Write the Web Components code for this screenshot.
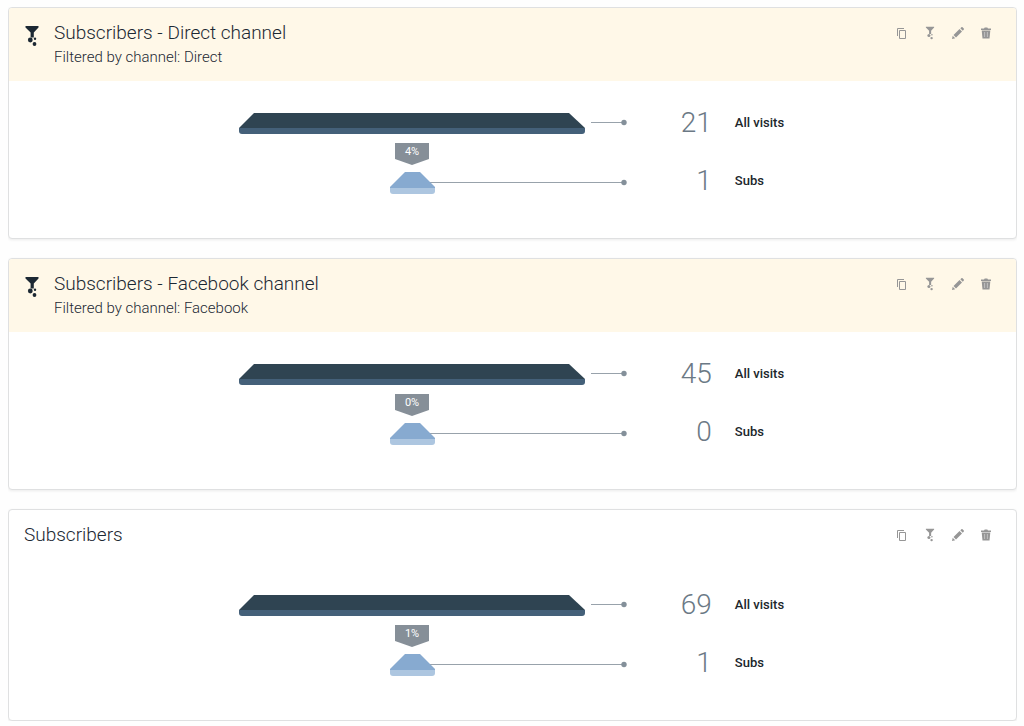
<!DOCTYPE html>
<html lang="en">
<head>
<meta charset="utf-8">
<title>Funnels</title>
<style>
  body {
    margin: 7px 7px 5px 8px;
    background: #fefefe;
    color: #1c2833;
    font-family: Roboto, "Liberation Sans", sans-serif;
  }
</style>
</head>
<body>
<funnel-list>
  <funnel-card filtered>
    <span slot="title">Subscribers - Direct channel</span>
    <span slot="filter">Filtered by channel: Direct</span>
    <funnel-chart rate="4%" first="21" first-label="All visits" last="1" last-label="Subs"></funnel-chart>
  </funnel-card>
  <funnel-card filtered>
    <span slot="title">Subscribers - Facebook channel</span>
    <span slot="filter">Filtered by channel: Facebook</span>
    <funnel-chart rate="0%" first="45" first-label="All visits" last="0" last-label="Subs"></funnel-chart>
  </funnel-card>
  <funnel-card>
    <span slot="title">Subscribers</span>
    <funnel-chart rate="1%" first="69" first-label="All visits" last="1" last-label="Subs"></funnel-chart>
  </funnel-card>
</funnel-list>

<script>
const icons = {
  funnel: `<svg viewBox="0 0 16 22">
    <path d="M1.500 1h13v1.500L9.800 7.500v5H6.600v-5L1.500 2.500z"/>
    <circle cx="6.300" cy="15" r="2.400"/><circle cx="11" cy="13.800" r="1.200"/><circle cx="10.500" cy="19" r="1.900"/>
  </svg>`,
  copy: `<svg viewBox="0 0 12 12">
    <path d="M1.500 9V1.500H8M3.500 3.500h6v8h-6z" fill="none" stroke="currentColor"/>
  </svg>`,
  edit: `<svg viewBox="0 0 12 12">
    <path d="M0 12l.7-3.200 2.500 2.500zM1.500 8L7.500 2 10 4.500l-6 6zM8.300 1.200l.9-.8c.5-.5 1-.5 1.500 0l.9.9c.5.5.5 1 0 1.500l-.8.9z"/>
  </svg>`,
  trash: `<svg viewBox="0 0 12 12">
    <path d="M1 1.500h3L4.700.5h2.600l.7 1h3V3H1z"/>
    <path d="M1.700 3.500h8.600L9.500 11.500h-7z"/>
    <path d="M4.600 5v5M7.400 5v5" stroke="#fff" stroke-opacity=".5" stroke-width=".8"/>
  </svg>`,
};

// defines an element that gets a fresh copy of its markup
function define(name, html, setup) {
  const template = document.createElement('template');
  template.innerHTML = html;
  customElements.define(name, class extends HTMLElement {
    constructor() {
      super();
      this.attachShadow({ mode: 'open' }).appendChild(template.content.cloneNode(true));
    }
    connectedCallback() {
      if (setup) setup(this, this.shadowRoot);
    }
  });
}

define('funnel-icon', `
  <style>
    :host { display: block; width: 12px; height: 14px; }
    div { height: 100%; }
    svg { display: block; width: 100%; height: 100%; fill: currentColor; }
  </style>
  <div></div>
`, (el, root) => {
  root.querySelector('div').innerHTML = icons[el.getAttribute('name')];
});

define('funnel-list', `
  <style>
    :host { display: flex; flex-direction: column; gap: 19px; }
  </style>
  <slot></slot>
`);

define('card-actions', `
  <style>
    :host { display: flex; gap: 8px; }
    button {
      display: flex;
      align-items: center;
      justify-content: center;
      width: 20px;
      height: 24px;
      padding: 0;
      border: 0;
      background: none;
      color: #969696;
      cursor: pointer;
    }
    .small { width: 12px; height: 12px; }
  </style>
  <button type="button" aria-label="Copy"><funnel-icon class="small" name="copy"></funnel-icon></button>
  <button type="button" aria-label="Filter"><funnel-icon name="funnel"></funnel-icon></button>
  <button type="button" aria-label="Edit"><funnel-icon class="small" name="edit"></funnel-icon></button>
  <button type="button" aria-label="Delete"><funnel-icon class="small" name="trash"></funnel-icon></button>
`);

define('funnel-card', `
  <style>
    :host {
      display: block;
      border: 1px solid #dfe0e1;
      border-radius: 4px;
      background: #fff;
      box-shadow: 0 1px 3px rgba(0, 0, 0, .08);
    }
    header {
      display: flex;
      align-items: flex-start;
      box-sizing: border-box;
      min-height: 53px;
      padding: 13px 20px 12px 15px;
    }
    .mark { display: none; width: 16px; height: 22px; margin: 4px 14px 0 0; }
    .text { flex: 1; }
    h2 { margin: 0; font-size: 19px; font-weight: 300; line-height: 24px; }
    p { margin: 0; font-size: 15px; font-weight: 300; line-height: 24px; }
    :host(:not([filtered])) p { display: none; }
    :host([filtered]) header { background: #fff8e8; border-radius: 3px 3px 0 0; }
    :host([filtered]) .mark { display: block; }
    .body { padding: 32px 0 44px; }
  </style>
  <header>
    <funnel-icon class="mark" name="funnel"></funnel-icon>
    <div class="text">
      <h2><slot name="title"></slot></h2>
      <p><slot name="filter"></slot></p>
    </div>
    <card-actions></card-actions>
  </header>
  <div class="body"><slot></slot></div>
`);

define('funnel-chart', `
  <style>
    :host { display: flex; justify-content: center; padding-right: 2px; }
    svg { display: block; width: 388px; height: 81px; }
    text { fill: #fff; font-size: 11px; text-anchor: middle; }
    .steps {
      display: grid;
      grid-template-columns: 85px auto;
      grid-auto-rows: 20px;
      align-content: start;
      gap: 38px 23px;
      line-height: 20px;
    }
    .count { color: #6b7985; font-size: 28px; font-weight: 300; text-align: right; }
    .label { color: #20262b; font-size: 13px; font-weight: 500; }
  </style>
  <svg viewBox="0 0 388 81">
    <path d="M0 15h346v3q0 3-3 3H3q-3 0-3-3z" fill="#446079"/>
    <path d="M15 0h315l16 15H0z" fill="#2f4452"/>
    <path d="M352 9.500h33M188 69.500h197" stroke="#98a2ab"/>
    <circle cx="385" cy="9.500" r="2.700" fill="#84909a"/>
    <circle cx="385" cy="69.500" r="2.700" fill="#84909a"/>
    <path d="M156 30h34v16l-17 6-17-6z" fill="#868f98"/>
    <text x="173" y="42"></text>
    <path d="M151 74h45v4q0 3-3 3h-39q-3 0-3-3z" fill="#adc6e0"/>
    <path d="M166 59h15l15 15v1h-45v-1z" fill="#87aad0"/>
  </svg>
  <div class="steps">
    <span class="count" data-attr="first"></span>
    <span class="label" data-attr="first-label"></span>
    <span class="count" data-attr="last"></span>
    <span class="label" data-attr="last-label"></span>
  </div>
`, (el, root) => {
  root.querySelector('text').textContent = el.getAttribute('rate');
  root.querySelectorAll('[data-attr]').forEach((span) => {
    span.textContent = el.getAttribute(span.dataset.attr);
  });
});
</script>
</body>
</html>
